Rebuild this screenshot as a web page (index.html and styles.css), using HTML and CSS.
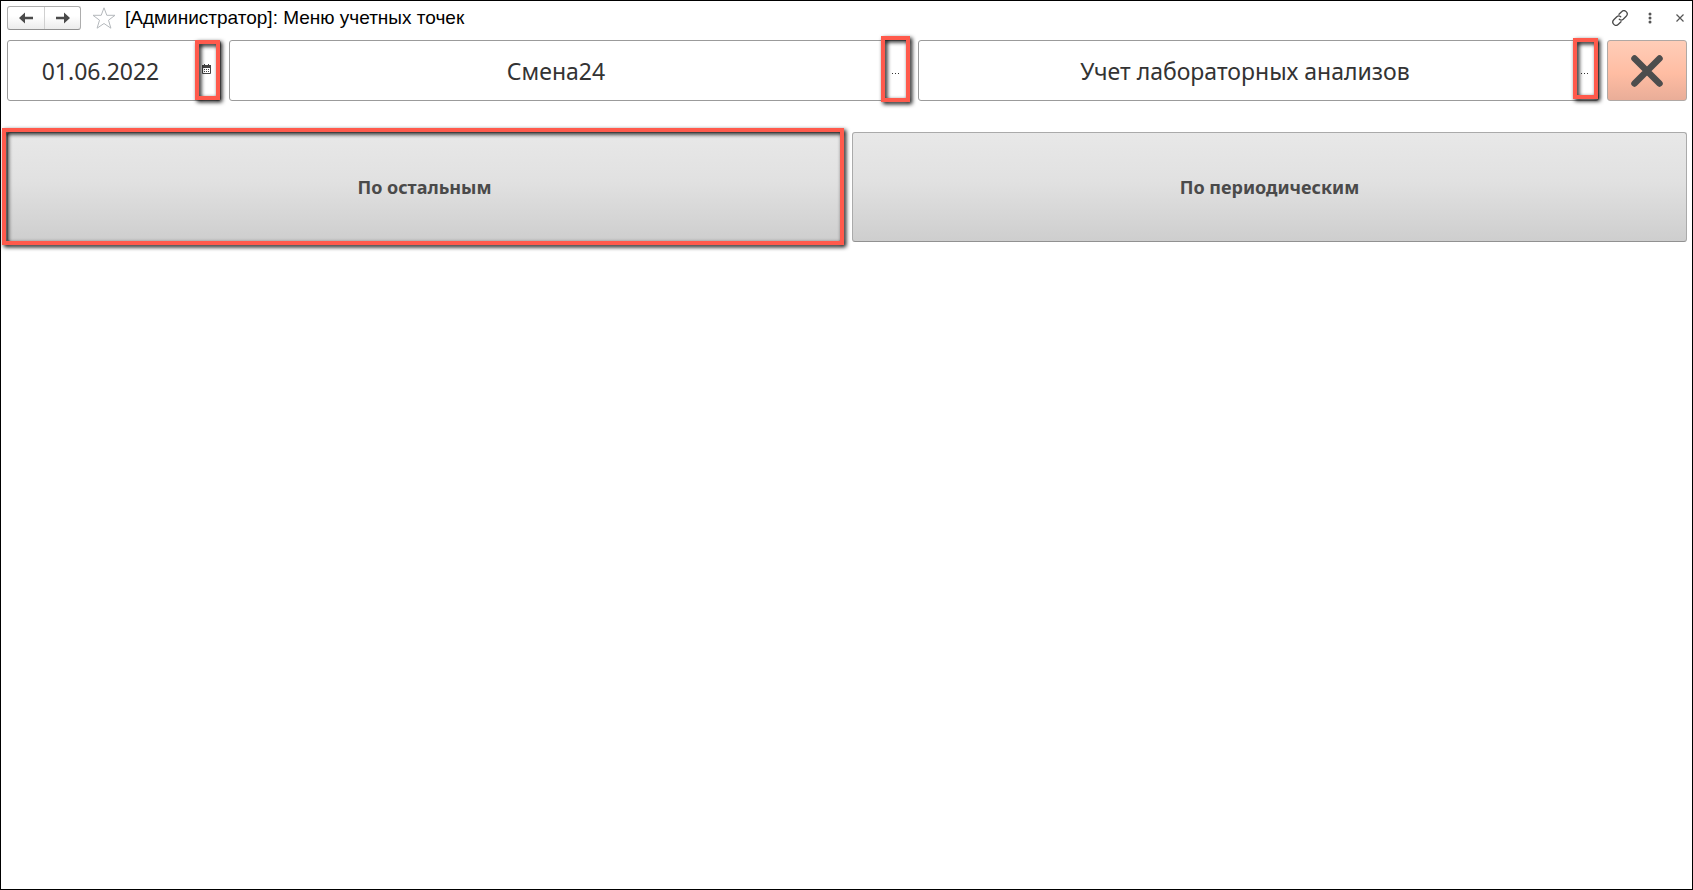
FILE: index.html
```html
<!DOCTYPE html>
<html lang="ru">
<head>
<meta charset="utf-8">
<title>Меню учетных точек</title>
<link rel="stylesheet" href="styles.css">
</head>
<body>
<div class="window">
  <header class="titlebar">
    <nav class="history">
      <button class="history-btn" type="button" aria-label="Назад">
        <svg width="14" height="12" viewBox="0 0 14 12"><path d="M0 6 6 .5V4.800H14V7.200H6V11.500Z" fill="#4a4a4a"/></svg>
      </button>
      <button class="history-btn" type="button" aria-label="Вперед">
        <svg width="14" height="12" viewBox="0 0 14 12"><path d="M14 6 8 .5V4.800H0V7.200H8V11.500Z" fill="#4a4a4a"/></svg>
      </button>
    </nav>
    <button class="icon-btn star" type="button" aria-label="Избранное">
      <svg width="24" height="22" viewBox="0 0 24 22"><path d="M12 .8 14.800 8.300H23L16.500 13.200 18.900 21.200 12 16.500 5.100 21.200 7.500 13.200 1 8.300H9.200Z" fill="#fff" stroke="#b4b8bc" stroke-width="1"/></svg>
    </button>
    <h1 class="title">[Администратор]: Меню учетных точек</h1>
    <div class="tools">
      <button class="icon-btn" type="button" aria-label="Ссылка">
        <svg width="16" height="16" viewBox="0 0 16 16" fill="none" stroke="#4a4a4a" stroke-width="1.300" stroke-linecap="round"><path d="M7 4.200 9.600 1.700A2.900 2.900 0 0 1 14.200 6.200L11.200 9.200A2.900 2.900 0 0 1 7.300 9.200M9 11.800 6.400 14.300A2.900 2.900 0 0 1 1.800 9.800L4.800 6.800A2.900 2.900 0 0 1 8.700 6.800"/></svg>
      </button>
      <button class="icon-btn" type="button" aria-label="Еще">
        <svg width="16" height="16" viewBox="0 0 16 16" fill="#555"><circle cx="8" cy="4" r="1.500"/><circle cx="8" cy="8" r="1.500"/><circle cx="8" cy="12" r="1.500"/></svg>
      </button>
      <button class="icon-btn" type="button" aria-label="Закрыть окно">
        <svg width="16" height="16" viewBox="0 0 16 16" stroke="#555" stroke-width="1.200"><path d="M4.500 4.500 11.500 11.500M11.500 4.500 4.500 11.500"/></svg>
      </button>
    </div>
  </header>

  <main class="content">
    <form class="filters">
      <div class="field field-date">
        <input class="field-input" type="text" value="01.06.2022" aria-label="Дата">
        <button class="field-btn" type="button" aria-label="Выбрать дату">
          <svg class="calendar" width="9" height="10" viewBox="0 0 9 10"><path d="M.5 1.500H8.500V9.500H.5Z" fill="#fff" stroke="#444"/><path d="M0 1H9V4H0ZM2 0H3V2H2ZM6 0H7V2H6Z" fill="#444"/><path d="M2 5H3V6H2ZM4 5H5V6H4ZM6 5H7V6H6ZM2 7H3V8H2ZM4 7H5V8H4ZM6 7H7V8H6Z" fill="#444"/></svg>
        </button>
        <span class="mark mark-date"></span>
      </div>
      <div class="field">
        <input class="field-input" type="text" value="Смена24" aria-label="Смена">
        <button class="field-btn" type="button" aria-label="Выбрать смену">
          <svg class="dots" width="7" height="1" viewBox="0 0 7 1"><path d="M0 0H1V1H0ZM3 0H4V1H3ZM6 0H7V1H6Z" fill="#333"/></svg>
        </button>
        <span class="mark mark-shift"></span>
      </div>
      <div class="field">
        <input class="field-input" type="text" value="Учет лабораторных анализов" aria-label="Вид учета">
        <button class="field-btn" type="button" aria-label="Выбрать вид учета">
          <svg class="dots" width="7" height="1" viewBox="0 0 7 1"><path d="M0 0H1V1H0ZM3 0H4V1H3ZM6 0H7V1H6Z" fill="#333"/></svg>
        </button>
        <span class="mark mark-kind"></span>
      </div>
      <button class="close-btn" type="button" aria-label="Закрыть">
        <svg width="34" height="34" viewBox="0 0 34 34" stroke="#4d4d4d" stroke-width="6.500" stroke-linecap="round"><path d="M4.500 4.500 29.500 29.500M29.500 4.500 4.500 29.500"/></svg>
      </button>
    </form>

    <div class="points">
      <div class="point">
        <button class="point-btn" type="button">По остальным</button>
        <span class="mark mark-point"></span>
      </div>
      <div class="point">
        <button class="point-btn" type="button">По периодическим</button>
      </div>
    </div>
  </main>
</div>
</body>
</html>
```
FILE: styles.css
```css
* {
  box-sizing: border-box;
}

body {
  margin: 0;
  background: #fff;
  font-family: "Noto Sans", "Open Sans", sans-serif;
}

button {
  margin: 0;
  padding: 0;
  font-family: inherit;
}

svg {
  display: block;
}

.window {
  min-height: 100vh;
  border: 1px solid #000;
}

.titlebar {
  display: flex;
  align-items: center;
  height: 34px;
  padding: 0 4px 0 6px;
}

.history {
  display: flex;
  height: 24px;
  border: 1px solid #adadad;
  border-bottom-color: #919191;
  border-radius: 3px;
  background: linear-gradient(#fff, #fff 40%, #ececec);
}

.history-btn {
  display: flex;
  align-items: center;
  justify-content: center;
  width: 36px;
  border: 0;
  background: none;
}

.history-btn + .history-btn {
  border-left: 1px solid #d0d0d0;
}

.icon-btn {
  display: flex;
  align-items: center;
  justify-content: center;
  border: 0;
  background: none;
}

.star {
  margin: 0 9px 0 11px;
}

.title {
  flex: 1;
  margin: 0;
  font: 400 19px/24px "Liberation Sans", Arial, sans-serif;
  color: #000;
}

.tools {
  display: flex;
  gap: 14px;
}

.content {
  padding: 5px 5px 0 6px;
}

.filters {
  display: flex;
  gap: 8px;
  height: 61px;
}

.field {
  position: relative;
  display: flex;
  flex: 1;
  min-width: 0;
  border: 1px solid #9b9b9b;
  border-radius: 3px;
  background: #fff;
}

.field-date {
  flex: 0 0 214px;
}

.field-input {
  flex: 1;
  min-width: 0;
  padding: 0;
  border: 0;
  background: none;
  color: #333;
  font: 400 23px/32px "Noto Sans", "Open Sans", sans-serif;
  text-align: center;
}

.field-btn {
  display: flex;
  align-items: center;
  justify-content: center;
  width: 27px;
  border: 0;
  background: none;
}

.calendar {
  margin-bottom: 3px;
}

.dots {
  margin-top: 6px;
}

.mark {
  position: absolute;
  border: 4px solid #ff5a4c;
  filter: drop-shadow(2px 2px 2px #000);
  pointer-events: none;
}

.mark-date {
  inset: -1px 0 0 auto;
  width: 25px;
}

.mark-shift {
  inset: -5px -1px -2px auto;
  width: 29px;
}

.mark-kind {
  inset: -3px 0 1px auto;
  width: 25px;
}

.mark-point {
  inset: -4px -2px -3px -5px;
}

.close-btn {
  display: flex;
  align-items: center;
  justify-content: center;
  width: 80px;
  border: 1px solid #b0a8a4;
  border-radius: 3px;
  background: linear-gradient(#ffcdb8, #ffbda3 55%, #e9ad98);
}

.points {
  display: flex;
  gap: 10px;
  margin-top: 31px;
}

.point {
  position: relative;
  flex: 1;
}

.point-btn {
  display: block;
  width: 100%;
  height: 110px;
  border: 1px solid #aaa;
  border-bottom-color: #919191;
  border-radius: 3px;
  background: linear-gradient(#e8e8e8, #e1e1e1 45%, #cecece);
  color: #4a4a4a;
  font-size: 18px;
  font-weight: 700;
  line-height: 24px;
}
```
